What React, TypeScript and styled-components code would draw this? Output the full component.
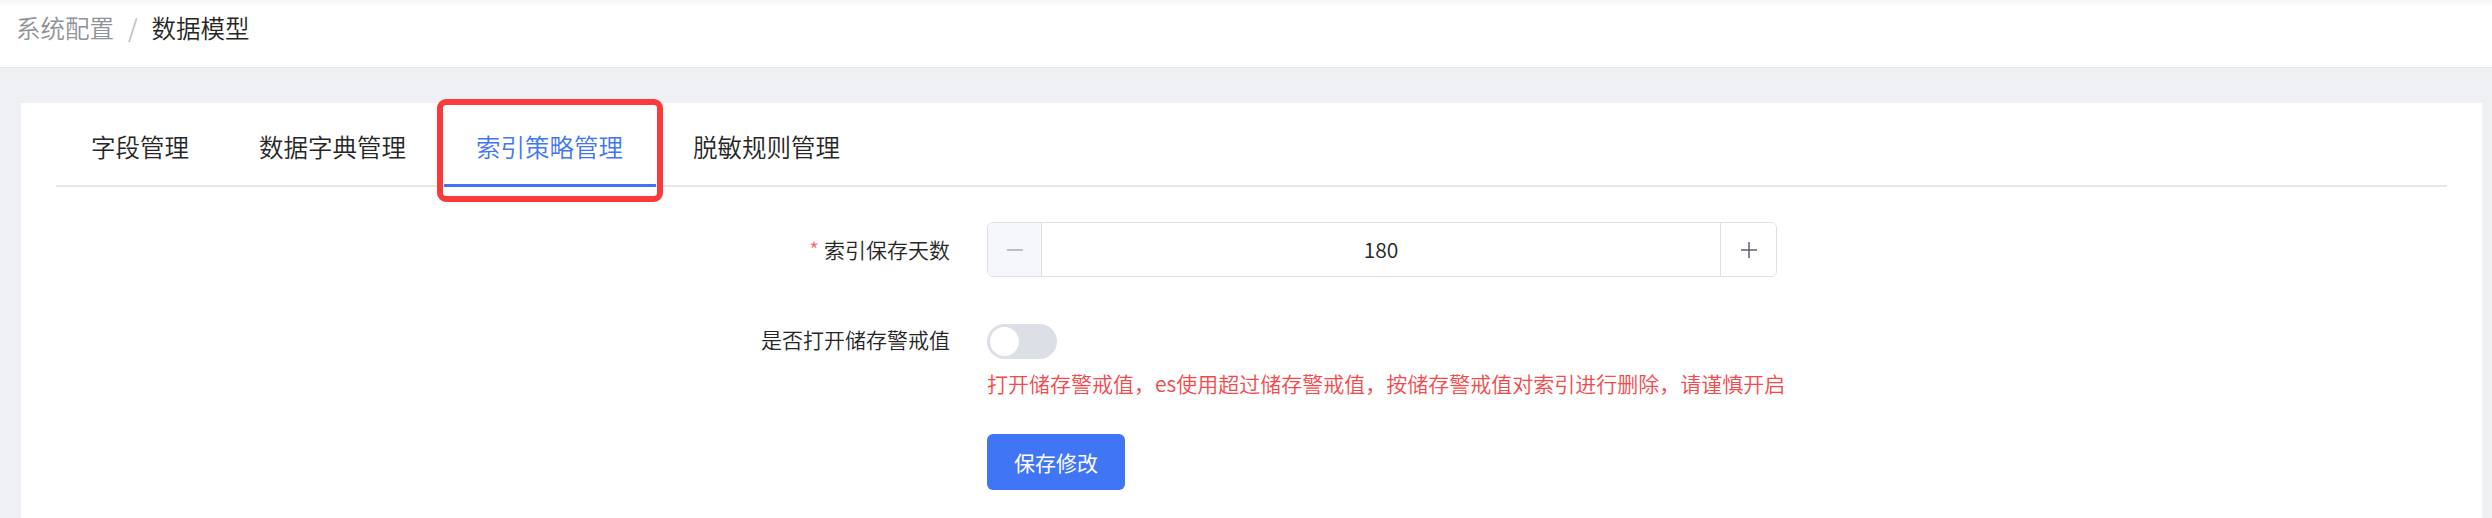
import styled, { createGlobalStyle } from "styled-components";

const GlobalStyle = createGlobalStyle`
  html, body {
    margin: 0;
    padding: 0;
    background: #eef0f4;
  }
  body {
    font-family: "Noto Sans CJK SC", "Noto Sans", "Liberation Sans", sans-serif;
    font-weight: 350;
    color: #262626;
  }
  * {
    box-sizing: border-box;
  }
`;

const Page = styled.div`
  width: 100%;
  min-height: 518px;
  background: #eef0f4;
`;

const Header = styled.header`
  height: 68px;
  padding: 11px 16px 0;
  background: #fff;
  border-bottom: 1px solid #e2e4ea;
  box-shadow: inset 0 10px 10px -10px rgba(0, 0, 0, 0.08);
  display: flex;
  align-items: flex-start;
  font-size: 24.5px;
  line-height: 34px;
`;

const Crumb = styled.span<{ current?: boolean }>`
  color: ${({ current }) => (current ? "#262626" : "#8f9297")};
`;

const CrumbSeparator = styled.span`
  color: #b8bcc4;
  margin: 0 14px 0 14px;
`;

const Main = styled.main`
  padding: 35px 10px 0 21px;
`;

const Card = styled.section`
  background: #fff;
  padding: 0 35px 40px;
  min-height: 420px;
`;

const TabNav = styled.nav`
  display: flex;
  border-bottom: 2px solid #e4e7ed;
`;

const TabItem = styled.div<{ active?: boolean }>`
  position: relative;
  height: 82px;
  padding: 5px 35px 0;
  line-height: 77px;
  font-size: 24.5px;
  color: ${({ active }) => (active ? "#4175f6" : "#262626")};
  white-space: nowrap;
`;

const ActiveBar = styled.span`
  position: absolute;
  left: 3px;
  right: 2px;
  bottom: -2px;
  height: 3px;
  background: #4175f6;
`;

const HighlightFrame = styled.span`
  position: absolute;
  left: -4px;
  right: -5px;
  top: -4px;
  bottom: -17px;
  border: 6px solid #fb3a3c;
  border-radius: 9px;
  pointer-events: none;
`;

const Form = styled.form`
  padding-left: 666px;
  margin-top: 35px;
  display: flex;
  flex-direction: column;
  gap: 35px;
`;

const FormItem = styled.div`
  display: grid;
  grid-template-columns: 265px 790px;
  align-items: start;
`;

const Label = styled.label`
  text-align: right;
  padding-right: 37px;
  font-size: 21px;
  line-height: 55px;
  color: #262626;
  white-space: nowrap;
`;

const Required = styled.span`
  color: #f56c6c;
  margin-right: 5px;
`;

const Control = styled.div`
  display: flex;
  flex-direction: column;
`;

const NumberInput = styled.div`
  display: flex;
  height: 55px;
  border: 1px solid #dcdfe6;
  border-radius: 6px;
  overflow: hidden;
`;

const StepButton = styled.span<{ side: "left" | "right" }>`
  width: ${({ side }) => (side === "left" ? "54px" : "56px")};
  display: flex;
  align-items: center;
  justify-content: center;
  background: ${({ side }) => (side === "left" ? "#f5f7fa" : "#fff")};
  border-left: ${({ side }) => (side === "right" ? "1px solid #dcdfe6" : "none")};
  border-right: ${({ side }) => (side === "left" ? "1px solid #dcdfe6" : "none")};
`;

const NumberValue = styled.span`
  flex: 1;
  text-align: center;
  line-height: 53px;
  font-size: 21px;
  color: #262626;
`;

const SwitchLine = styled.div`
  height: 55px;
  display: flex;
  align-items: center;
  padding-top: 4px;
`;

const SwitchTrack = styled.span<{ on?: boolean }>`
  position: relative;
  width: 70px;
  height: 35px;
  border-radius: 18px;
  background: ${({ on }) => (on ? "#4175f6" : "#dcdfe6")};
`;

const SwitchKnob = styled.span<{ on?: boolean }>`
  position: absolute;
  top: 3px;
  left: ${({ on }) => (on ? "38px" : "3px")};
  width: 29px;
  height: 29px;
  border-radius: 50%;
  background: #fff;
`;

const Hint = styled.div`
  font-size: 21px;
  line-height: 32px;
  color: #f5484a;
  white-space: nowrap;
`;

const PrimaryButton = styled.button`
  width: 138px;
  height: 56px;
  border: none;
  border-radius: 6px;
  background: #4076f6;
  color: #fff;
  font-family: inherit;
  font-weight: 400;
  font-size: 21px;
  cursor: pointer;
`;

const tabs = ["字段管理", "数据字典管理", "索引策略管理", "脱敏规则管理"];

const MinusIcon = () => (
  <svg width="18" height="18" viewBox="0 0 18 18">
    <line x1="1" y1="9" x2="17" y2="9" stroke="#a8abb2" strokeWidth="1.5" />
  </svg>
);

const PlusIcon = () => (
  <svg width="18" height="18" viewBox="0 0 18 18">
    <line x1="1" y1="9" x2="17" y2="9" stroke="#5b6070" strokeWidth="1.5" />
    <line x1="9" y1="1" x2="9" y2="17" stroke="#5b6070" strokeWidth="1.5" />
  </svg>
);

export default function App() {
  const activeTab = 2;

  return (
    <Page>
      <GlobalStyle />
      <Header>
        <Crumb>系统配置</Crumb>
        <CrumbSeparator>/</CrumbSeparator>
        <Crumb current>数据模型</Crumb>
      </Header>
      <Main>
        <Card>
          <TabNav>
            {tabs.map((tab, i) => (
              <TabItem key={tab} active={i === activeTab}>
                {tab}
                {i === activeTab && <ActiveBar />}
                {i === activeTab && <HighlightFrame />}
              </TabItem>
            ))}
          </TabNav>

          <Form onSubmit={(e) => e.preventDefault()}>
            <FormItem>
              <Label>
                <Required>*</Required>索引保存天数
              </Label>
              <NumberInput>
                <StepButton side="left">
                  <MinusIcon />
                </StepButton>
                <NumberValue>180</NumberValue>
                <StepButton side="right">
                  <PlusIcon />
                </StepButton>
              </NumberInput>
            </FormItem>

            <FormItem>
              <Label>是否打开储存警戒值</Label>
              <Control>
                <SwitchLine>
                  <SwitchTrack>
                    <SwitchKnob />
                  </SwitchTrack>
                </SwitchLine>
                <Hint>
                  打开储存警戒值，es使用超过储存警戒值，按储存警戒值对索引进行删除，请谨慎开启
                </Hint>
              </Control>
            </FormItem>

            <FormItem>
              <span />
              <Control>
                <PrimaryButton type="submit">保存修改</PrimaryButton>
              </Control>
            </FormItem>
          </Form>
        </Card>
      </Main>
    </Page>
  );
}
